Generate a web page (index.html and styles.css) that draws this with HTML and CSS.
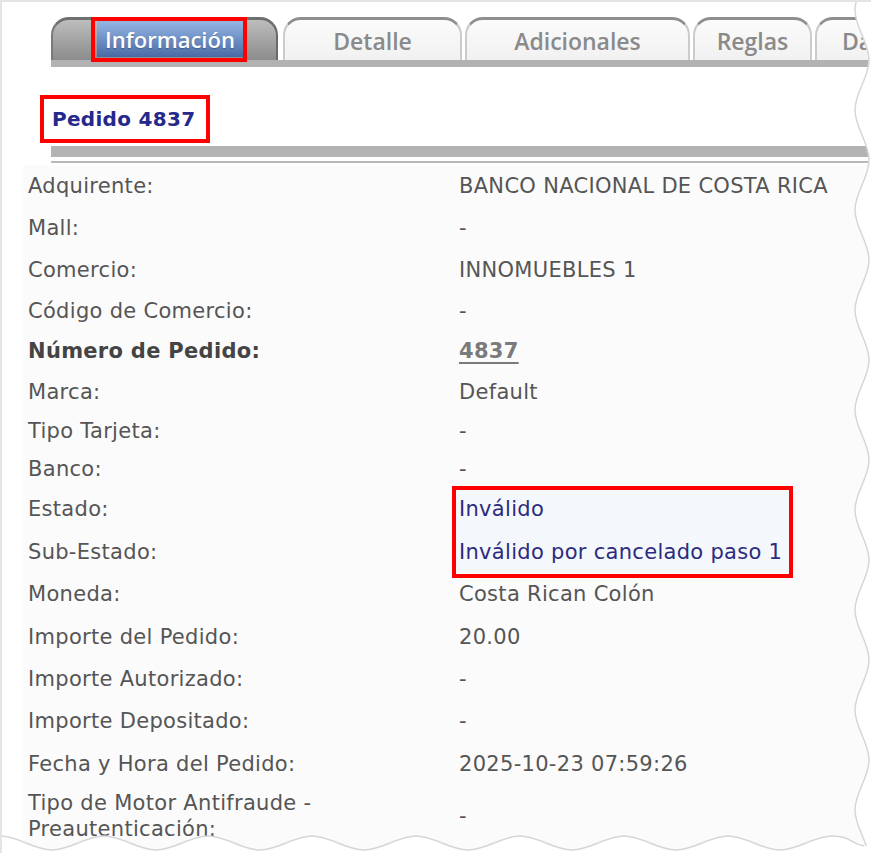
FILE: index.html
```html
<!DOCTYPE html>
<html lang="es">
<head>
<meta charset="utf-8">
<title>Pedido 4837</title>
<link rel="stylesheet" href="styles.css">
</head>
<body>
<div class="frame">
  <div class="tabs">
    <div class="tab tab--active"><span class="tab-label">Información</span></div>
    <div class="tab tab--detalle">Detalle</div>
    <div class="tab tab--adicionales">Adicionales</div>
    <div class="tab tab--reglas">Reglas</div>
    <div class="tab tab--datos">Datos</div>
  </div>
  <div class="tabbar"></div>

  <div class="title-row">
    <h1 class="title">Pedido 4837</h1>
  </div>
  <div class="rule-thick"></div>
  <div class="rule-thin"></div>

  <div class="details">
    <div class="k">Adquirente:</div><div class="v">BANCO NACIONAL DE COSTA RICA</div>
    <div class="k">Mall:</div><div class="v">-</div>
    <div class="k">Comercio:</div><div class="v">INNOMUEBLES 1</div>
    <div class="k">Código de Comercio:</div><div class="v">-</div>
    <div class="k k--strong">Número de Pedido:</div><div class="v"><a class="order-link">4837</a></div>
    <div class="k">Marca:</div><div class="v">Default</div>
    <div class="k">Tipo Tarjeta:</div><div class="v">-</div>
    <div class="k">Banco:</div><div class="v">-</div>
    <div class="k">Estado:</div><div class="v v--hl v--boxed">Inválido</div>
    <div class="k">Sub-Estado:</div><div class="v v--hl">Inválido por cancelado paso 1</div>
    <div class="k">Moneda:</div><div class="v">Costa Rican Colón</div>
    <div class="k">Importe del Pedido:</div><div class="v">20.00</div>
    <div class="k">Importe Autorizado:</div><div class="v">-</div>
    <div class="k">Importe Depositado:</div><div class="v">-</div>
    <div class="k">Fecha y Hora del Pedido:</div><div class="v">2025-10-23 07:59:26</div>
    <div class="k k--wrap">Tipo de Motor Antifraude -<br>Preautenticación:</div><div class="v">-</div>
  </div>

  <svg class="torn" width="871" height="853" viewBox="0 0 871 853" aria-hidden="true">
    <path class="torn-fill" d="M 869 -40 C 869 -22 855 -8 855 10 S 869 42 869 60 S 855 92 855 110 S 869 142 869 160 S 855 192 855 210 S 869 242 869 260 S 855 292 855 310 S 869 342 869 360 S 855 392 855 410 S 869 442 869 460 S 855 492 855 510 S 869 542 869 560 S 855 592 855 610 S 869 642 869 660 S 855 692 855 710 S 869 742 869 760 S 855 792 855 810 S 869 842 869 860 L 900 860 L 900 -40 Z"/>
    <path class="torn-line" d="M 869 -40 C 869 -22 855 -8 855 10 S 869 42 869 60 S 855 92 855 110 S 869 142 869 160 S 855 192 855 210 S 869 242 869 260 S 855 292 855 310 S 869 342 869 360 S 855 392 855 410 S 869 442 869 460 S 855 492 855 510 S 869 542 869 560 S 855 592 855 610 S 869 642 869 660 S 855 692 855 710 S 869 742 869 760 S 855 792 855 810 S 869 842 869 860"/>
    <path class="torn-fill" d="M -52 850 C -34 850 -18 836 0 836 S 34 850 52 850 S 86 836 104 836 S 138 850 156 850 S 190 836 208 836 S 242 850 260 850 S 294 836 312 836 S 346 850 364 850 S 398 836 416 836 S 450 850 468 850 S 502 836 520 836 S 554 850 572 850 S 606 836 624 836 S 658 850 676 850 S 710 836 728 836 S 762 850 780 850 S 814 836 832 836 S 850 843 864 846 L 900 846 L 900 900 L -52 900 Z"/>
    <path class="torn-line" d="M -52 850 C -34 850 -18 836 0 836 S 34 850 52 850 S 86 836 104 836 S 138 850 156 850 S 190 836 208 836 S 242 850 260 850 S 294 836 312 836 S 346 850 364 850 S 398 836 416 836 S 450 850 468 850 S 502 836 520 836 S 554 850 572 850 S 606 836 624 836 S 658 850 676 850 S 710 836 728 836 S 762 850 780 850 S 814 836 832 836 S 850 843 864 846"/>
  </svg>
</div>
</body>
</html>
```
FILE: styles.css
```css
html, body {
  margin: 0;
  padding: 0;
  background: #ffffff;
}

body {
  font-family: "DejaVu Sans", Verdana, sans-serif;
}

.frame {
  position: relative;
  width: 871px;
  height: 853px;
  box-sizing: border-box;
  border-top: 2px solid #e4e4e4;
  border-left: 2px solid #e4e4e4;
  overflow: hidden;
}

/* ---------- tabs ---------- */
.tabs {
  display: flex;
  gap: 3px;
  margin: 15px 0 0 49px;
  height: 43px;
}

.tab {
  flex: none;
  box-sizing: border-box;
  height: 43px;
  display: flex;
  align-items: center;
  justify-content: center;
  padding-top: 1px;
  font-family: "Open Sans", "DejaVu Sans", sans-serif;
  font-size: 23px;
  font-weight: 600;
  color: #8a8a8a;
  background: linear-gradient(#fbfbfb, #f1f1f1);
  border-top: 3px solid #8e8e8e;
  border-left: 2px solid #cbcbcb;
  border-right: 2px solid #cbcbcb;
  border-radius: 18px 18px 0 0;
}

.tab--active {
  width: 227px;
  margin-right: 2px;
  justify-content: flex-start;
  align-items: stretch;
  padding: 1px 0 3px 44px;
  background: linear-gradient(#bdbdbd, #8c8c8c);
  border-top-color: #6f6f6f;
  border-left-color: #7a7a7a;
  border-right-color: #6a6a6a;
}

.tab-label {
  position: relative;
  width: 146px;
  display: flex;
  align-items: center;
  justify-content: center;
  background: linear-gradient(#95b7e4, #4a6aa6);
  color: #ffffff;
  font-size: 22px;
  text-shadow: 0 1px 1px rgba(0, 0, 0, 0.25);
}

.tab-label::after {
  content: "";
  position: absolute;
  left: -6px;
  right: -4px;
  top: -4px;
  bottom: -5px;
  border: 4px solid #ff0000;
}

.tab--detalle { width: 179px; }
.tab--adicionales { width: 225px; }
.tab--reglas { width: 119px; }
.tab--datos { width: 150px; justify-content: flex-start; padding-left: 25px; }

.tabbar {
  height: 7px;
  margin-left: 49px;
  background: #b2b2b2;
}

/* ---------- title ---------- */
.title-row {
  padding: 28px 0 0 38px;
  height: 51px;
}

.title {
  display: inline-block;
  margin: 0;
  padding: 8px 11px 8px 8px;
  line-height: 24px;
  font-size: 20px;
  font-weight: bold;
  letter-spacing: 0.3px;
  color: #25298c;
  border: 4px solid #ff0000;
}

.rule-thick {
  height: 11px;
  margin-left: 49px;
  background: #b3b3b3;
}

.rule-thin {
  height: 2px;
  margin: 4px 0 0 49px;
  background: #b8b8b8;
}

/* ---------- details ---------- */
.details {
  display: grid;
  grid-template-columns: 431px 335px;
  grid-template-rows: 42px 42px 42px 40px 40px 41px 38px 37px 43px 43px 42px 43px 42px 42px 44px 60px;
  margin: 2px 0 0 21px;
  padding-bottom: 20px;
  background: #fbfbfb;
  font-size: 21px;
  letter-spacing: 0.3px;
  color: #555555;
}

.k,
.v {
  display: flex;
  align-items: center;
  padding-left: 5px;
  white-space: nowrap;
}

.k--strong {
  font-weight: bold;
  color: #444444;
}

.k--wrap {
  line-height: 26px;
}

.v--hl {
  background: #f4f8fc;
  color: #2c2b7e;
}

.v--boxed {
  position: relative;
}

.v--boxed::after {
  content: "";
  position: absolute;
  left: -2px;
  right: -4px;
  top: -1px;
  height: 92px;
  box-sizing: border-box;
  border: 4px solid #ff0000;
}

.order-link {
  font-weight: bold;
  color: #7a7a7a;
  text-decoration: underline;
  text-underline-offset: 4px;
  text-decoration-thickness: 2px;
}

/* ---------- torn paper edge ---------- */
.torn {
  position: absolute;
  left: -2px;
  top: -2px;
  pointer-events: none;
}

.torn-fill {
  fill: #ffffff;
}

.torn-line {
  fill: none;
  stroke: #d6d6d6;
  stroke-width: 1.5;
}
```
